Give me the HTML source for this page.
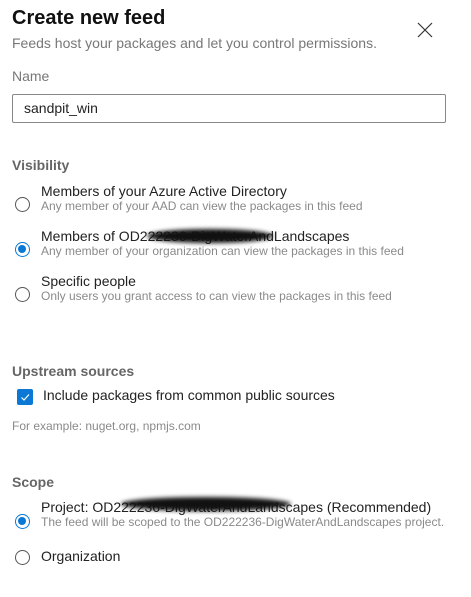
<!DOCTYPE html>
<html><head><style>
body{margin:0;width:471px;height:597px;background:#fff;font-family:"Liberation Sans",sans-serif;position:relative;overflow:hidden}
.a{position:absolute;white-space:nowrap}
.t{font-size:14px;color:#222}
.d{font-size:12px;color:#8a8a8a}
.h{font-size:14px;font-weight:bold;color:#666}
.r{position:absolute;width:15px;height:15px;border:1px solid #555;border-radius:50%;box-sizing:border-box}
.rs{border:1.5px solid #0a78d4}
.rs:after{content:"";position:absolute;left:2px;top:2px;width:8px;height:8px;border-radius:50%;background:#0a78d4}
.blob{position:absolute;background:#111;border-radius:50%;filter:blur(2px)}
</style></head><body>
<div class="a" style="left:12px;top:7px;font-size:20px;font-weight:bold;color:#111">Create new feed</div>
<div class="a" style="left:12px;top:35px;font-size:14px;color:#777">Feeds host your packages and let you control permissions.</div>
<svg class="a" style="left:417px;top:22px" width="16" height="16"><path d="M1 1L15 15M15 1L1 15" stroke="#333" stroke-width="1.2"/></svg>
<div class="a" style="left:12px;top:68px;font-size:14px;color:#777">Name</div>
<div class="a" style="left:12px;top:94px;width:434px;height:29px;border:1px solid #888;box-sizing:border-box;border-radius:2px"></div>
<div class="a t" style="left:24px;top:100px">sandpit_win</div>

<div class="a h" style="left:12px;top:157px">Visibility</div>
<div class="r" style="left:15px;top:197px"></div>
<div class="a t" style="left:41px;top:183px">Members of your Azure Active Directory</div>
<div class="a d" style="left:41px;top:199px">Any member of your AAD can view the packages in this feed</div>
<div class="r rs" style="left:15px;top:242px"></div>
<div class="a t" style="left:41px;top:228px">Members of OD222236-DigWaterAndLandscapes</div>
<div class="blob" style="left:147px;top:229px;width:126px;height:14px"></div>
<div class="a d" style="left:41px;top:244px">Any member of your organization can view the packages in this feed</div>
<div class="r" style="left:15px;top:287px"></div>
<div class="a t" style="left:41px;top:273px">Specific people</div>
<div class="a d" style="left:41px;top:289px">Only users you grant access to can view the packages in this feed</div>

<div class="a h" style="left:12px;top:363px">Upstream sources</div>
<div class="a" style="left:17px;top:389px;width:16px;height:16px;background:#0a78d4;border-radius:2px"></div>
<svg class="a" style="left:17px;top:389px" width="16" height="16"><path d="M4.5 8.5L7 11L12 5.5" stroke="#fff" stroke-width="1.2" fill="none"/></svg>
<div class="a t" style="left:43px;top:387px">Include packages from common public sources</div>
<div class="a d" style="left:12px;top:419px">For example: nuget.org, npmjs.com</div>

<div class="a h" style="left:12px;top:474px">Scope</div>
<div class="r rs" style="left:15px;top:514px"></div>
<div class="a t" style="left:41px;top:499px">Project: OD222236-DigWaterAndLandscapes (Recommended)</div>
<div class="blob" style="left:121px;top:497px;width:170px;height:14px"></div>
<div class="a d" style="left:41px;top:515px">The feed will be scoped to the OD222236-DigWaterAndLandscapes project.</div>
<div class="r" style="left:15px;top:550px"></div>
<div class="a t" style="left:41px;top:548px">Organization</div>
</body></html>
